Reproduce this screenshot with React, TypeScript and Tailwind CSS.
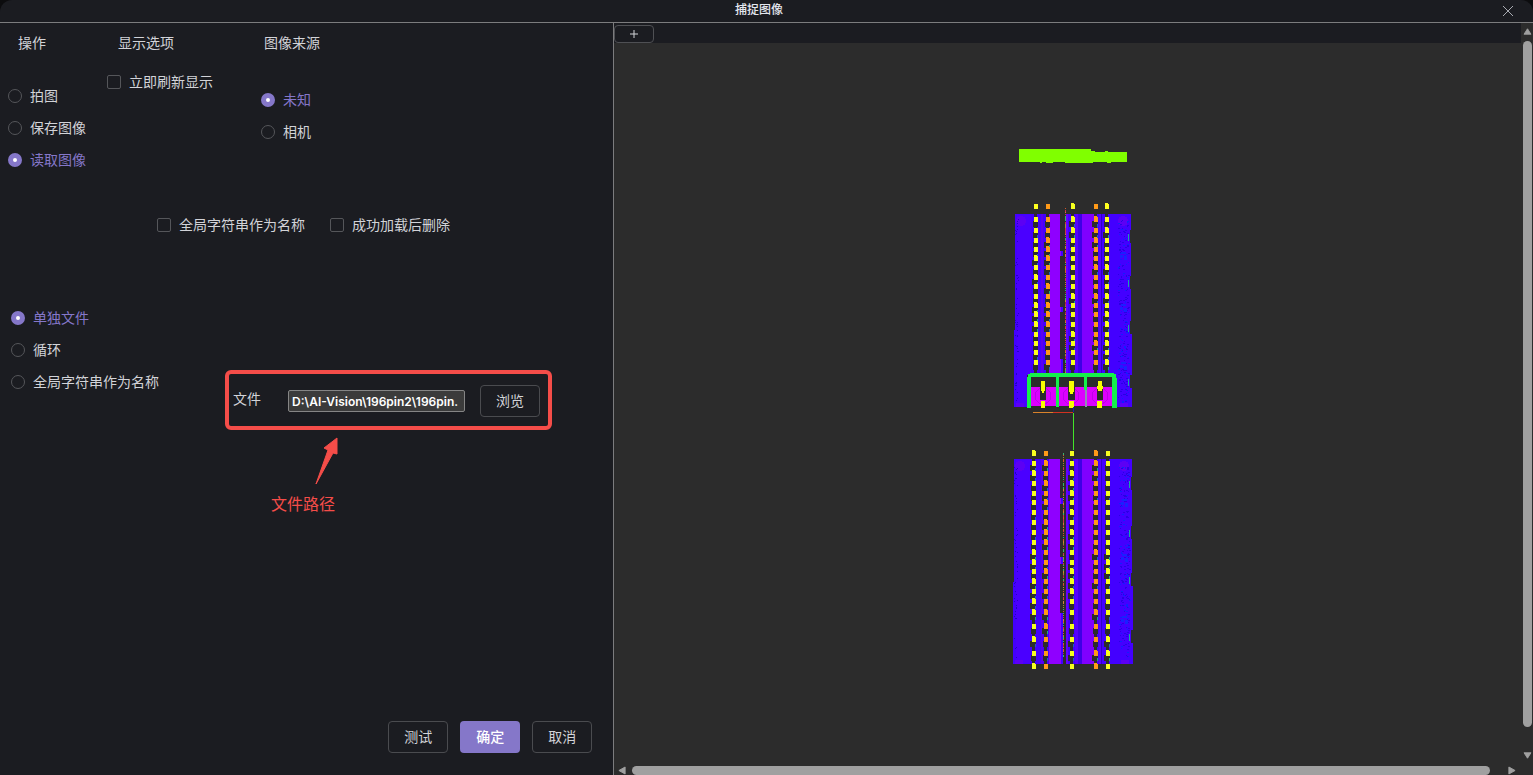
import React from "react";

const RADIO =
  "m-0 h-[14px] w-[14px] flex-none appearance-none rounded-full border border-[#55565a] checked:border-[5px] checked:border-[#8577c9] checked:bg-white";
const CHECK =
  "m-0 h-[14px] w-[14px] flex-none appearance-none rounded-[2px] border border-[#55565a] checked:bg-[#8577c9]";
const BUTTON =
  "h-8 w-[60px] flex-none rounded border border-[#4a4b4f] text-sm text-[#d2d3d8]";

type RadioListProps = { name: string; options: string[]; selected: string };

function RadioList({ name, options, selected }: RadioListProps) {
  return (
    <div className="flex flex-col">
      {options.map((label) => (
        <label
          key={label}
          className="flex h-8 items-center gap-2 whitespace-nowrap text-[#d2d3d8] has-checked:text-[#8577c9]"
        >
          <input type="radio" name={name} defaultChecked={label === selected} className={RADIO} />
          {label}
        </label>
      ))}
    </div>
  );
}

function CheckOption({ label }: { label: string }) {
  return (
    <label className="flex h-5 items-center gap-2 whitespace-nowrap">
      <input type="checkbox" className={CHECK} />
      {label}
    </label>
  );
}

const noise = (n: number) => {
  const v = Math.sin(n * 127.1 + 11.7) * 43758.5453;
  return v - Math.floor(v);
};

const UPPER_ROWS = [206, 219, 230, 240, 249, 258, 267, 277, 286, 296, 305, 314, 324, 334, 343, 352, 362];
const LOWER_ROWS = [
  453, 463, 473, 483, 493, 502, 512, 522, 532, 542, 552, 562, 571, 581, 591, 601, 612, 626, 639, 653, 666,
];

type Pin = { x: number; color: string };
const UPPER_PINS: Pin[] = [
  { x: 1034, color: "#ffff1e" },
  { x: 1046, color: "#ff9a18" },
  { x: 1071, color: "#f4ff1e" },
  { x: 1094, color: "#ff9a18" },
  { x: 1105, color: "#ffff1e" },
];
const LOWER_PINS: Pin[] = [
  { x: 1032, color: "#f8ff1e" },
  { x: 1044, color: "#ff9a18" },
  { x: 1070, color: "#f4ff1e" },
  { x: 1094, color: "#ff9a18" },
  { x: 1106, color: "#f8ff1e" },
];
const SCAN_COLORS = ["#d2582c", "#c8344c", "#a08a35", "#a82348", "#3bb06c", "#d0803a"];

type ConnectorProps = {
  left: number;
  right: number;
  top: number;
  bottom: number;
  rows: number[];
  pins: Pin[];
  scanX: number;
  seed: number;
};

function Connector({ left, right, top, bottom, rows, pins, scanX, seed }: ConnectorProps) {
  const h = bottom - top;
  const grains = Array.from({ length: 240 }, (_, i) => ({
    x: Math.round(right - 13 + noise(seed + i * 5) * 10),
    y: Math.round(top + 5 + noise(seed + i * 3) * (h - 10)),
    w: 1 + Math.round(noise(seed + i * 7)),
  }));
  const leftGrains = Array.from({ length: 60 }, (_, i) => ({
    x: Math.round(left + noise(seed + i * 11) * 3),
    y: Math.round(top + 5 + noise(seed + i * 13) * (h - 10)),
  }));
  const scan = Array.from({ length: Math.floor(h / 2) }, (_, i) => i);
  return (
    <g shapeRendering="crispEdges">
      <rect x={left} y={top} width={right - left} height={h} fill="#4300ff" />
      <rect x={left - 1} y={top + h * 0.6} width={right - left + 2} height={h * 0.4} fill="#4300ff" />
      <rect x={left + 2} y={top + 1} width="14" height={h - 2} fill="#4a00ff" />
      <circle cx={left + 6} cy={top + 7} r="5" fill="#5c00f4" />
      <circle cx={right - 8} cy={top + 7} r="5" fill="#5c00f4" />
      <rect x={left + 1} y={bottom - 4} width="8" height="4" fill="#5c00f4" />
      <rect x={right - 11} y={bottom - 4} width="8" height="4" fill="#5c00f4" />
      <rect x="1041" y={top} width="2" height={h} fill="#5a00f0" />
      <rect x="1049" y={top} width="12" height={h} fill="#8f00ff" />
      <rect x="1066" y={top} width="2" height={h} fill="#6500ff" />
      <rect x="1075" y={top} width="3" height={h} fill="#5600ff" />
      <rect x="1078" y={top} width="4" height={h} fill="#3d00e6" />
      <rect x="1082" y={top} width="12" height={h} fill="#8000ff" />
      <rect x="1099" y={top} width="2" height={h} fill="#5600ff" />
      <rect x="1101" y={top} width="1" height={h} fill="#3000c8" />
      {grains.map((g, i) => (
        <rect key={i} x={g.x} y={g.y} width={g.w} height="1" fill={i % 3 ? "#2a00e4" : "#1020ff"} />
      ))}
      {[0.21, 0.48, 0.78].map((t) => (
        <g key={t} fill="#1a20ff">
          <rect x={right - 10} y={top + h * t - 3} width="5" height="2" />
          <rect x={right - 11} y={top + h * t} width="3" height="3" />
          <rect x={right - 7} y={top + h * t + 1} width="3" height="4" />
        </g>
      ))}
      {leftGrains.map((g, i) => (
        <rect key={i} x={g.x} y={g.y} width="1" height="1" fill="#2200c8" />
      ))}
      <rect x="1060" y={top} width="3" height={h * 0.19} fill="#2c2c2c" />
      <rect x="1060" y={top + h * 0.22} width="3" height={h * 0.26} fill="#2c2c2c" />
      <rect x="1060" y={top + h * 0.51} width="3" height={h * 0.24} fill="#2c2c2c" />
      <rect x="1063" y={top} width="3" height={h} fill="#2c2c2c" />
      {scan.map((i) => (
        <rect
          key={i}
          x={scanX}
          y={top - 6 + i * 2}
          width="1"
          height={1 + Math.round(noise(seed + i))}
          fill={SCAN_COLORS[Math.floor(noise(seed + i * 2) * SCAN_COLORS.length)]}
        />
      ))}
      {pins.map((p, c) => (
        <g key={p.x}>
          <rect x={p.x} y={top} width="3" height={h} fill="#2c2c2c" />
          {rows.map((y, r) => {
            const n = noise(seed + c * 41 + r * 17);
            const inside = y > top && y < bottom;
            return (
              <g key={y}>
                {inside && (
                  <rect
                    x={p.x - 1 - Math.round(n)}
                    y={y + 2}
                    width={5 + Math.round(n)}
                    height="6"
                    fill="#2c2c2c"
                  />
                )}
                {inside && n > 0.45 && (
                  <rect x={p.x + 3} y={y + 5} width="1" height="3" fill={n > 0.75 ? "#17a884" : "#1b62c0"} />
                )}
                <rect x={p.x} y={y - 2} width="4" height="5" fill={p.color} />
                {n > 0.6 && <rect x={p.x} y={y - 3} width="3" height="1" fill={p.color} />}
              </g>
            );
          })}
        </g>
      ))}
      {[0.12, 0.36, 0.59, 0.87].map((t) => (
        <g key={t}>
          <rect x={right - 1} y={top + h * t - 7} width="2" height="13" fill="#2c2c2c" />
          <rect x={right - 3} y={top + h * t - 3} width="1" height="7" fill="#18a9a0" />
        </g>
      ))}
    </g>
  );
}

function HeightMap() {
  return (
    <svg viewBox="999 133 137 542" className="h-[542px] w-[137px] flex-none" role="img" aria-label="高度图">
      <path
        d="M1019 149h72v2h4v1h10v-1h3v1h19v10h-16v1h-4v-1h-14v1h-28v-1h-12v1h-7v-1h-4v1h-2v-1h-21z"
        fill="#80ff00"
        shapeRendering="crispEdges"
      />
      <Connector
        left={1015}
        right={1131}
        top={214}
        bottom={407}
        rows={UPPER_ROWS}
        pins={UPPER_PINS}
        scanX={1065}
        seed={3}
      />
      <Connector
        left={1014}
        right={1132}
        top={459}
        bottom={664}
        rows={LOWER_ROWS}
        pins={LOWER_PINS}
        scanX={1063}
        seed={59}
      />

      <g shapeRendering="crispEdges">
        <path d="M1027 375h88v32h-88z" fill="#2c2c2c" />
        <path d="M1031 387h82v19h-82z" fill="#dc00ff" />
        <g fill="none" stroke="#bd00e8">
          <circle cx="1043" cy="396" r="8" />
          <circle cx="1071" cy="396" r="8" />
          <circle cx="1100" cy="396" r="8" />
        </g>
        <path d="M1040 386h6v14h-6zM1068 386h7v14h-7zM1097 386h6v14h-6z" fill="#2c2c2c" />
        <path
          d="M1041 381h4v10h-4zM1042 391h2v2h-2zM1041 401h4v7h-4zM1069 381h5v11h-5zM1070 392h3v2h-3zM1069 401h5v7h-5zM1098 381h4v10h-4zM1097 386h6v3h-6zM1097 401h5v7h-5z"
          fill="#f8ff00"
        />
        <path d="M1030 373h84v1h2v4h1v30h-5v-31h-81v31h-4v-31h1v-3h2z" fill="#14f04b" />
        <path d="M1056 377h3v30h-3z" fill="#14f04b" />
        <path d="M1084 377h3v13h-3z" fill="#14f04b" />
        <path d="M1085 390h2v17h-2z" fill="#8d8fb0" />
        <path d="M1033 412h20v1h-20z" fill="#d9822b" />
        <path d="M1053 412h20v1h-20z" fill="#d23220" />
        <path d="M1073 407h1v5h-1z" fill="#1a20b0" />
        <path d="M1073 413h1v37h-1z" fill="#42e62a" />
      </g>
    </svg>
  );
}

function ScrollArrow({ points, className }: { points: string; className: string }) {
  return (
    <svg viewBox="0 0 9 9" preserveAspectRatio="none" className={`flex-none ${className}`} aria-hidden="true">
      <polygon points={points} fill="#a0a0a0" stroke="#a0a0a0" strokeLinejoin="round" />
    </svg>
  );
}

export default function App() {
  return (
    <div className="bg-[#0c0c0e]">
      <div className="flex min-h-screen flex-col overflow-hidden rounded-t-xl bg-[#1b1c21] font-['Liberation_Sans','Noto_Sans_CJK_SC',sans-serif] text-sm leading-5 text-[#d2d3d8]">
        <header className="flex h-[23px] items-center border-b border-[#7c7c7e]">
          <h1 className="flex-1 pb-[2px] pl-[35px] text-center text-xs font-medium text-[#e4e6ee]">捕捉图像</h1>
          <button type="button" aria-label="关闭" className="flex w-[50px] justify-center">
            <svg viewBox="0 0 10 10" className="h-[10px] w-[10px]" fill="none" stroke="#a9abb2">
              <path d="M0 0L10 10M10 0L0 10" />
            </svg>
          </button>
        </header>

        <div className="flex flex-1">
          <section className="flex w-2/5 flex-col pt-[10px]">
            <div className="flex pl-2">
              <div className="w-[99px]">
                <h2 className="pl-[10px]">操作</h2>
                <div className="mt-[27px]">
                  <RadioList name="operation" options={["拍图", "保存图像", "读取图像"]} selected="读取图像" />
                </div>
              </div>
              <div className="w-[154px]">
                <h2 className="pl-[11px]">显示选项</h2>
                <div className="mt-[19px]">
                  <CheckOption label="立即刷新显示" />
                </div>
              </div>
              <div>
                <h2 className="pl-[3px]">图像来源</h2>
                <div className="mt-[31px]">
                  <RadioList name="source" options={["未知", "相机"]} selected="未知" />
                </div>
              </div>
            </div>

            <div className="mt-[39px] flex gap-[25px] pl-[157px]">
              <CheckOption label="全局字符串作为名称" />
              <CheckOption label="成功加载后删除" />
            </div>

            <div className="mt-[67px] flex items-start pl-[11px]">
              <div className="w-[214px] flex-none">
                <RadioList name="mode" options={["单独文件", "循环", "全局字符串作为名称"]} selected="单独文件" />
              </div>
              <div className="pt-[68px]">
                <div className="flex h-[60px] items-center rounded-md border-4 border-[#f54d49] pt-[2px] pr-2 pl-1">
                  <label htmlFor="file-path" className="w-[55px] pb-1">
                    文件
                  </label>
                  <input
                    id="file-path"
                    type="text"
                    defaultValue="D:\AI-Vision\196pin2\196pin."
                    className="h-[22px] w-[177px] rounded-[2px] border border-[#858585] bg-[#3b3b3b] px-[3px] font-['Inter',sans-serif] text-xs font-semibold text-white"
                  />
                  <button type="button" className={`${BUTTON} ml-[15px]`}>
                    浏览
                  </button>
                </div>
                <div className="flex w-[156px] flex-col items-center text-base leading-6 text-[#f54d49]">
                  <svg viewBox="0 0 24 50" className="mt-[7px] ml-12 h-[50px] w-6" aria-hidden="true">
                    <path d="M22 1L9 11L13 13L1 47L18 16L22 17Z" fill="#f54d49" stroke="#f54d49" strokeLinejoin="round" />
                  </svg>
                  <p className="mt-[6px]">文件路径</p>
                </div>
              </div>
            </div>

            <div className="mt-auto flex justify-end gap-3 pr-[21px] pb-[22px]">
              <button type="button" className={BUTTON}>
                测试
              </button>
              <button type="button" className="h-8 w-[60px] rounded bg-[#8577c9] text-sm font-medium text-white">
                确定
              </button>
              <button type="button" className={BUTTON}>
                取消
              </button>
            </div>
          </section>

          <section className="flex flex-1 flex-col border-l border-[#7c7c7e] bg-[#2c2c2c]">
            <div className="flex flex-1">
              <div className="flex flex-1 flex-col">
                <div className="flex h-5 items-end bg-[#1b1c21]">
                  <button
                    type="button"
                    aria-label="新增"
                    className="flex h-[18px] w-10 items-center justify-center rounded border border-[#4f5054]"
                  >
                    <svg viewBox="0 0 8 8" className="h-2 w-2" fill="none" stroke="#d2d3d8" aria-hidden="true">
                      <path d="M4 0V8M0 4H8" />
                    </svg>
                  </button>
                </div>
                <div className="flex flex-1 items-center justify-center">
                  <HeightMap />
                </div>
              </div>
              <div className="flex w-3 flex-col items-center pt-[5px] pb-[6px]">
                <ScrollArrow points="4.5,1 8,8 1,8" className="h-[7px] w-[9px]" />
                <div className="mt-[6px] mb-[25px] w-[9px] flex-1 rounded-full bg-[#a0a0a0]" />
                <ScrollArrow points="1,1 8,1 4.5,8" className="h-[7px] w-[9px]" />
              </div>
            </div>
            <div className="flex h-[10px] items-center pr-[17px] pl-1">
              <ScrollArrow points="1,4.5 8,1 8,8" className="h-[9px] w-2" />
              <div className="mr-[18px] ml-[6px] h-[9px] flex-1 rounded-full bg-[#a0a0a0]" />
              <ScrollArrow points="1,1 8,4.5 1,8" className="h-[9px] w-2" />
            </div>
          </section>
        </div>
      </div>
    </div>
  );
}
